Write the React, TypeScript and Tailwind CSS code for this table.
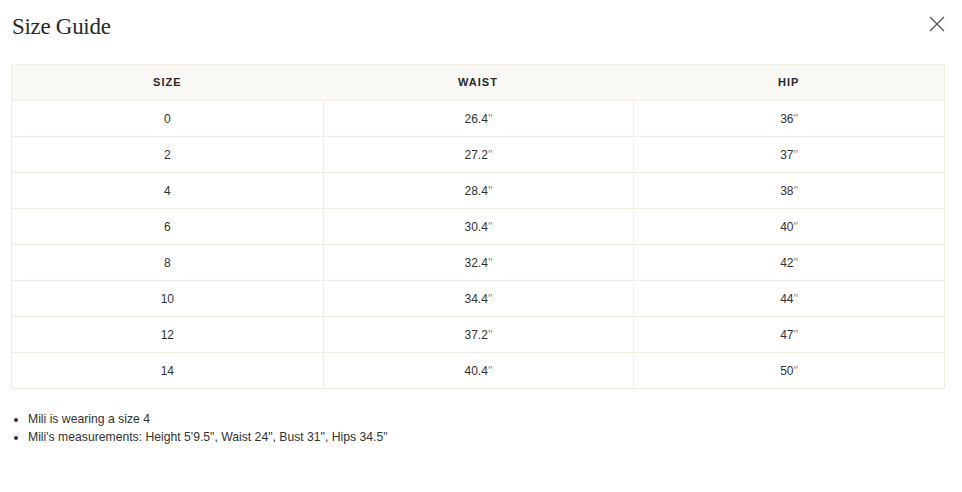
import React from "react";

const rows: [string, string, string][] = [
  ["0", "26.4", "36"],
  ["2", "27.2", "37"],
  ["4", "28.4", "38"],
  ["6", "30.4", "40"],
  ["8", "32.4", "42"],
  ["10", "34.4", "44"],
  ["12", "37.2", "47"],
  ["14", "40.4", "50"],
];

function Inch({ v }: { v: string }) {
  return (
    <span>
      {v}
      <span className="text-[#888]">''</span>
    </span>
  );
}

export default function App() {
  return (
    <div className="w-[962px] h-[492px] bg-white relative" style={{ fontFamily: '"Liberation Sans", Arial, sans-serif' }}>
      <div className="flex items-start justify-between pl-[12px] pr-[16px] pt-[12px] h-[64px]">
        <h1 className="text-[23px] leading-[30px] text-[#2a2a2a] tracking-[-0.3px]" style={{ fontFamily: '"Liberation Serif", "Times New Roman", serif' }}>
          Size Guide
        </h1>
        <svg width="18" height="18" viewBox="0 0 18 18" className="mt-[3px]">
          <path d="M2 2L16 16M16 2L2 16" stroke="#555" strokeWidth="1.3" fill="none" />
        </svg>
      </div>
      <div className="mx-[11px] w-[934px] border border-[#f1eee4]">
        <div className="grid grid-cols-3 h-[35px] bg-[#faf8f4] items-center text-center text-[11px] font-bold tracking-[1px] text-[#2a2a2a]">
          <div>SIZE</div>
          <div>WAIST</div>
          <div>HIP</div>
        </div>
        {rows.map((r, i) => (
          <div key={i} className="grid grid-cols-3 h-[36px] border-t border-[#f1eee4] text-center text-[12px] text-[#333]">
            <div className="flex items-center justify-center">{r[0]}</div>
            <div className="flex items-center justify-center border-l border-[#f1eee4]"><Inch v={r[1]} /></div>
            <div className="flex items-center justify-center border-l border-[#f1eee4]"><Inch v={r[2]} /></div>
          </div>
        ))}
      </div>
      <ul className="mt-[21px] pl-[28px] list-disc text-[12.2px] leading-[18px] text-[#333]">
        <li>Mili is wearing a size 4</li>
        <li>Mili's measurements: Height 5'9.5", Waist 24", Bust 31", Hips 34.5"</li>
      </ul>
    </div>
  );
}
